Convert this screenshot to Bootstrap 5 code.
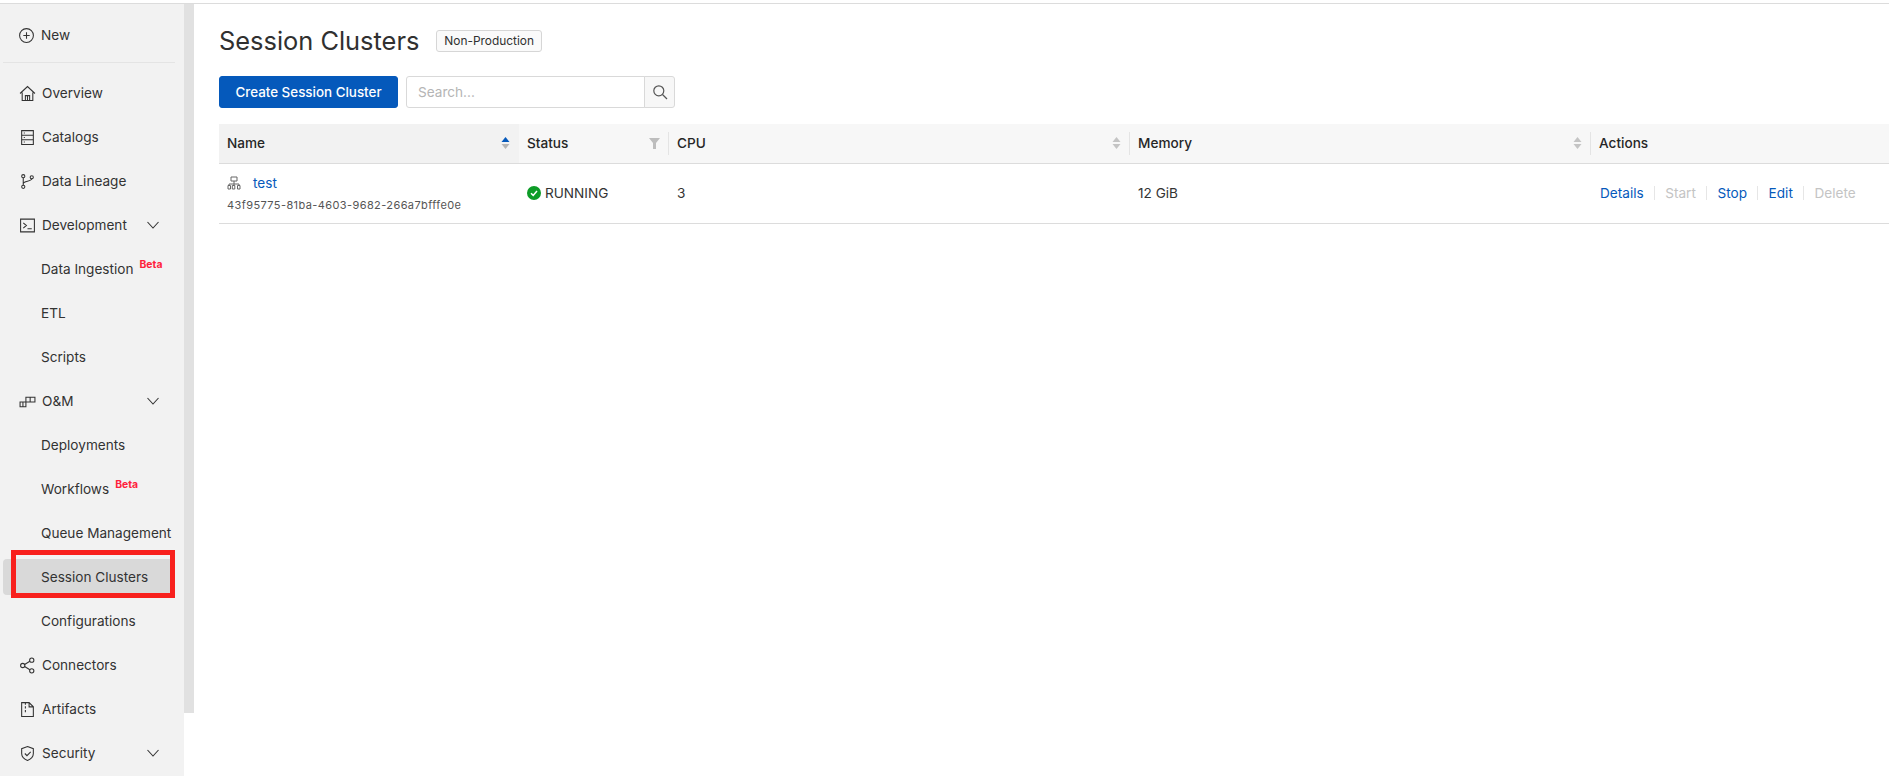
<!DOCTYPE html>
<html lang="en">
<head>
<meta charset="utf-8">
<title>Session Clusters</title>
<link href="https://cdn.jsdelivr.net/npm/bootstrap@5.3.0/dist/css/bootstrap.min.css" rel="stylesheet">
<style>
html,body{height:776px;overflow:hidden;background:#fff}
body{font-family:Inter,"Liberation Sans",sans-serif;font-size:13.6px;color:#303030}
.topline{background:#fff;border-bottom:1px solid #dcdcdc;box-sizing:content-box;height:3px}
.shell{height:772px}
.side{width:184px;background:#f2f2f2;flex:none;position:relative;overflow:hidden;padding-top:9px}
.rail{width:10px;flex:none;height:709px;background:#e1e1e1}
.nrow{height:44px;padding-left:19px;padding-right:24px;color:#333;white-space:nowrap}
.nrow svg.ic{width:17px;height:17px;margin-right:6px;flex:none;fill:none;stroke:#333;stroke-width:1}
.nrow.sub{padding-left:41px;padding-right:0}
.nrow .chev{width:14px;height:14px;margin-left:auto;fill:none;stroke:#333;stroke-width:1.1;flex:none}
.beta{font-size:10.4px;font-weight:700;color:#ff1f3d;align-self:flex-start;margin:12px 0 0 6px;line-height:12px}
.sep{border-top:1px solid #e4e4e4;margin:5px 9px 8px 3px;width:172px}
.nrow.on{position:relative}
.nrow.on::before{content:"";position:absolute;left:3px;right:9px;top:4px;bottom:4px;background:#d9d9d9;border-radius:4px}
.nrow.on span{position:relative}
.redbox{position:absolute;left:11px;top:546px;width:164px;height:48px;border:5px solid #f8201d}
.main{padding:0 0 0 25px;min-width:0}
.ttl{font-size:25.4px;font-weight:400;line-height:32px;margin:0;color:#303030}
.tag{font-size:11.9px;line-height:20px;border:1px solid #d6d6d6;border-radius:3px;background:#fafafa;padding:0 7px;margin:5px 0 0 17px}
.hd{padding-top:21px;height:72px}
.bar{height:32px;margin-bottom:16px}
.cbtn{font-size:13.4px;font-weight:500;height:32px;width:179px;padding:0;border-radius:3px;--bs-btn-bg:#0559bb;--bs-btn-border-color:#0559bb}
.sgrp{width:269px;margin-left:8px}
.sinp{height:32px;font-size:13.6px;border-radius:3px 0 0 3px;border-color:#d9d9d9;padding:0 11px;color:#333}
.sinp::placeholder{color:#b5b5b5}
.sbtn{width:31px;height:32px;padding:0;background:#f7f7f7;border:1px solid #d9d9d9;border-radius:0 3px 3px 0;margin-left:-1px;display:flex;align-items:center;justify-content:center;flex:none}
.tbl{table-layout:fixed;width:1670px;margin:0;--bs-table-border-color:#dedede}
.tbl th{background:#f7f7f7;font-weight:500;height:39px;padding:0 8px;vertical-align:middle;color:#262626;position:relative;border-bottom:1px solid #dcdcdc;font-size:13.6px}
.tbl th.srt{background:#f2f2f2}
.tbl th .dv{position:absolute;right:0;top:8px;bottom:8px;border-right:1px solid #e4e4e4}
.tbl td{height:60px;padding:0 8px;vertical-align:middle;color:#333;border-bottom:1px solid #dcdcdc}
.tbl a{color:#0559bb;text-decoration:none}
.srtic{position:absolute;right:9px;top:13px}
.uid{font-size:11px;color:#555;letter-spacing:.4px;line-height:14px;margin-top:6px;white-space:nowrap}
.nm{line-height:17px}
.act{white-space:nowrap}
.act .off{color:#c4c4c4}
.act i{display:inline-block;height:14px;border-left:1px solid #e6e6e6;margin:0 10.3px;vertical-align:-2px}
.tbl td.act{padding-left:9px}
.stat{width:14px;height:14px;margin-right:4px;vertical-align:-2px}
</style>
</head>
<body>
<div class="topline"></div>
<div class="shell d-flex">
  <nav class="side">
    <div class="nrow d-flex align-items-center" style="padding-left:18px"><svg class="ic" viewBox="0 0 16 16"><circle cx="8" cy="8" r="6.500"/><path d="M8 5v6M5 8h6"/></svg><span>New</span></div>
    <div class="sep"></div>
    <div class="nrow d-flex align-items-center"><svg class="ic" viewBox="0 0 16 16"><path d="M1 8 8 1.500 15 8M3 7v7.500h10V7M6 14.500V10h4v4.500M8 10v4.500"/></svg><span>Overview</span></div>
    <div class="nrow d-flex align-items-center"><svg class="ic" viewBox="0 0 16 16"><path d="M2.500 1.500h11v13h-11zM2.500 5.800h11M2.500 10.200h11M4.500 3.700h1M4.500 8h1M4.500 12.300h1"/></svg><span>Catalogs</span></div>
    <div class="nrow d-flex align-items-center"><svg class="ic" viewBox="0 0 16 16"><circle cx="4" cy="3" r="1.500"/><circle cx="4" cy="13" r="1.500"/><circle cx="12" cy="4" r="1.500"/><path d="M4 4.500v7M4 10c0-2.500 8-2 8-4.500"/></svg><span>Data Lineage</span></div>
    <div class="nrow d-flex align-items-center"><svg class="ic" viewBox="0 0 16 16"><path d="M1.500 2h13v12h-13zM4 5.500 7 8l-3 2.500M8 11h4"/></svg><span>Development</span><svg class="chev" viewBox="0 0 14 14"><path d="M1.500 4 7 10l5.500-6"/></svg></div>
    <div class="nrow sub d-flex align-items-center"><span>Data Ingestion</span><span class="beta">Beta</span></div>
    <div class="nrow sub d-flex align-items-center"><span>ETL</span></div>
    <div class="nrow sub d-flex align-items-center"><span>Scripts</span></div>
    <div class="nrow d-flex align-items-center"><svg class="ic" viewBox="0 0 16 16"><path d="M1 8.500h5.500V13H1zM6.500 8.500V4H15v4.500H6.500zM10.500 4v4.500M6.500 8.500V13M3.700 8.500V13"/></svg><span>O&amp;M</span><svg class="chev" viewBox="0 0 14 14"><path d="M1.500 4 7 10l5.500-6"/></svg></div>
    <div class="nrow sub d-flex align-items-center"><span>Deployments</span></div>
    <div class="nrow sub d-flex align-items-center"><span>Workflows</span><span class="beta">Beta</span></div>
    <div class="nrow sub d-flex align-items-center"><span>Queue Management</span></div>
    <div class="nrow sub on d-flex align-items-center"><span>Session Clusters</span></div>
    <div class="nrow sub d-flex align-items-center"><span>Configurations</span></div>
    <div class="nrow d-flex align-items-center"><svg class="ic" viewBox="0 0 16 16"><circle cx="3.500" cy="8" r="2"/><circle cx="12" cy="3" r="2"/><circle cx="12" cy="13" r="2"/><path d="M5.300 7 10.200 4M5.300 9l4.900 3"/></svg><span>Connectors</span></div>
    <div class="nrow d-flex align-items-center"><svg class="ic" viewBox="0 0 16 16"><path d="M2.500 1.500h7l4 4v9h-11zM9.500 1.500v4h4M6 1.500v2M6 5v2M6 8.500v2"/></svg><span>Artifacts</span></div>
    <div class="nrow d-flex align-items-center"><svg class="ic" viewBox="0 0 16 16"><path d="M8 1.500 13.500 3.500V8c0 3.500-3 5.500-5.500 6.500C5.500 13.500 2.500 11.500 2.500 8V3.500zM5.500 8l2 2 3.500-3.500"/></svg><span>Security</span><svg class="chev" viewBox="0 0 14 14"><path d="M1.500 4 7 10l5.500-6"/></svg></div>
    <div class="redbox"></div>
  </nav>
  <div class="rail"></div>
  <main class="main flex-grow-1">
    <div class="hd d-flex align-items-start">
      <h1 class="ttl">Session Clusters</h1>
      <span class="tag">Non-Production</span>
    </div>
    <div class="bar d-flex align-items-center">
      <button class="btn btn-primary cbtn" type="button">Create Session Cluster</button>
      <div class="sgrp d-flex">
        <input class="form-control sinp" type="text" placeholder="Search...">
        <button class="sbtn" type="button" aria-label="Search"><svg width="16" height="16" viewBox="0 0 16 16" fill="none" stroke="#555" stroke-width="1.200"><circle cx="6.800" cy="6.800" r="5"/><path d="m10.500 10.500 4.500 4.500"/></svg></button>
      </div>
    </div>
    <table class="table tbl">
      <colgroup><col style="width:300px"><col style="width:150px"><col style="width:461px"><col style="width:461px"><col></colgroup>
      <thead><tr>
        <th class="srt">Name<svg class="srtic" width="9" height="12" viewBox="0 0 9 12"><path d="M4.500 0 8.500 5h-8z" fill="#0559bb"/><path d="M4.500 12 8.500 7h-8z" fill="#b5b5b5"/></svg></th>
        <th>Status<svg class="srtic" style="top:14px" width="11" height="11" viewBox="0 0 11 11"><path d="M0 0h11L7 5v6H4V5z" fill="#bdbdbd"/></svg><span class="dv"></span></th>
        <th>CPU<svg class="srtic" width="9" height="12" viewBox="0 0 9 12"><path d="M4.500 0 8.500 5h-8z" fill="#c4c4c4"/><path d="M4.500 12 8.500 7h-8z" fill="#c4c4c4"/></svg><span class="dv"></span></th>
        <th>Memory<svg class="srtic" width="9" height="12" viewBox="0 0 9 12"><path d="M4.500 0 8.500 5h-8z" fill="#c4c4c4"/><path d="M4.500 12 8.500 7h-8z" fill="#c4c4c4"/></svg><span class="dv"></span></th>
        <th>Actions</th>
      </tr></thead>
      <tbody><tr>
        <td>
          <div class="nm d-flex align-items-center"><svg width="14" height="14" viewBox="0 0 14 14" fill="none" stroke="#666" stroke-width="1" style="margin-right:12px"><path d="M4 1h6v4H4zM7 5v3M2 8h10M2 8v1.500M7 8v1.500M12 8v1.500M1 9.500h2.500V13H1zM5.300 9.500h2.500V13H5.300zM10.500 9.500H13V13h-2.500z"/></svg><a href="#">test</a></div>
          <div class="uid">43f95775-81ba-4603-9682-266a7bfffe0e</div>
        </td>
        <td><svg class="stat" viewBox="0 0 14 14"><circle cx="7" cy="7" r="7" fill="#0d9c27"/><path d="m4 7.200 2.200 2.200L10 5" fill="none" stroke="#fff" stroke-width="1.500"/></svg>RUNNING</td>
        <td>3</td>
        <td>12 GiB</td>
        <td class="act"><a href="#">Details</a><i></i><span class="off">Start</span><i></i><a href="#">Stop</a><i></i><a href="#">Edit</a><i></i><span class="off">Delete</span></td>
      </tr></tbody>
    </table>
  </main>
</div>
<script src="https://cdn.jsdelivr.net/npm/bootstrap@5.3.0/dist/js/bootstrap.bundle.min.js"></script>
</body>
</html>
